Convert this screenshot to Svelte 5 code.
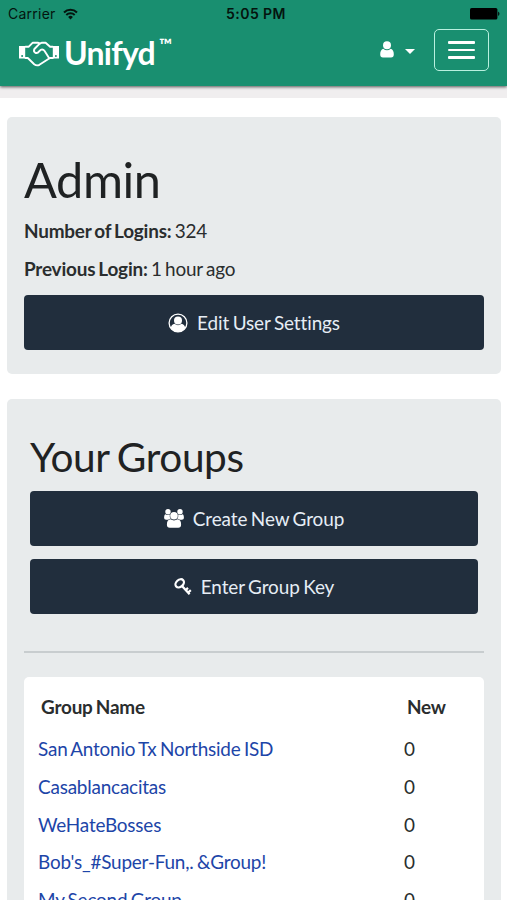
<script lang="ts">
  interface Group {
    id: number;
    name: string;
    unread: number;
  }

  const userName: string = "Admin";
  const logins: number = 324;
  const previousLogin: string = "1 hour ago";

  let groups: Group[] = [
    { id: 1, name: "San Antonio Tx Northside ISD", unread: 0 },
    { id: 2, name: "Casablancacitas", unread: 0 },
    { id: 3, name: "WeHateBosses", unread: 0 },
    { id: 4, name: "Bob's_#Super-Fun,. &Group!", unread: 0 },
    { id: 5, name: "My Second Group", unread: 0 },
  ];
</script>

<div class="screen">
  <header class="navbar">
    <div class="status-bar">
      <div class="carrier">
        <span>Carrier</span>
        <svg width="15" height="12" viewBox="0 0 15 12" fill="none" stroke="#04140e">
          <path d="M1 4.4a9.4 9.4 0 0 1 13 0" stroke-width="2.1" />
          <path d="M3.3 7a6.1 6.1 0 0 1 8.4 0" stroke-width="2" />
          <path d="M7.5 11.5 5.1 9a3.4 3.4 0 0 1 4.8 0z" fill="#04140e" stroke="none" />
        </svg>
      </div>
      <span class="clock">5:05 PM</span>
      <div class="battery">
        <svg width="30" height="12" viewBox="0 0 30 12" fill="#000">
          <rect x="0" y="0" width="27.4" height="11.6" rx="1.6" />
          <path d="M28.2 3.6a2.6 2.6 0 0 1 0 4.4z" />
        </svg>
      </div>
    </div>

    <div class="nav-row">
      <div class="brand">
        <svg class="handshake" width="40" height="27" viewBox="0 0 40 27">
          <g fill="none" stroke="#fff" stroke-width="1.9" stroke-linejoin="round" stroke-linecap="round">
            <path d="M6.500 5.700h3.300l4-4h5l1.900.9 2.300-.9h3.600l4.500 4h2.600" />
            <path d="M6.500 17h2.300l6.400 6.200q2.500 2 5.200.6l8.200-5.300 2.300-1.500h2.900" />
            <path d="M20.700 2.600 15.400 8q-1.200 2.500.9 3.800 2.400.8 3.700-1.300l1.700-1.700q2.500-.8 3.900 1.200l4.600 7.200" />
          </g>
          <path d="M0 5h6.200v12.500H0z" fill="#fff" />
          <path d="M33.800 5H40v12.500h-6.200z" fill="#fff" />
          <circle cx="3.100" cy="15" r="1" fill="#198f70" />
          <circle cx="36.900" cy="15" r="1" fill="#198f70" />
        </svg>
        <span class="brand-name">Unifyd</span>
        <span class="tm">™</span>
      </div>

      <div class="nav-actions">
        <svg width="14" height="17" viewBox="0 0 14 17" fill="#fff">
          <circle cx="7" cy="4.200" r="4" />
          <path d="M3.200 7.700Q5 9.300 7 9.300t3.800-1.600Q13.800 8.700 13.800 13.300 13.800 16.600 11 16.600H3Q.2 16.600.2 13.300.2 8.700 3.200 7.700z" />
        </svg>
        <span class="caret"></span>
        <button class="toggle" aria-label="Menu">
          <span></span>
          <span></span>
          <span></span>
        </button>
      </div>
    </div>
  </header>

  <main>
    <section class="well">
      <h1>{userName}</h1>
      <p><b>Number of Logins:</b> {logins}</p>
      <p><b>Previous Login:</b> {previousLogin}</p>
      <button class="btn">
        <svg width="20" height="20" viewBox="0 0 20 20">
          <circle cx="10" cy="10" r="8.900" fill="none" stroke="#fff" stroke-width="1.300" />
          <circle cx="10" cy="7.500" r="4" fill="#fff" />
          <path d="M2.700 15Q3.600 11 6.500 10.700q3.500 2.900 7 0 2.900.3 3.800 4.300a8.700 8.700 0 0 1-14.600 0z" fill="#fff" />
        </svg>
        <span>Edit User Settings</span>
      </button>
    </section>

    <section class="well">
      <div class="group-actions">
        <h2>Your Groups</h2>
        <button class="btn">
          <svg width="20" height="19" viewBox="0 0 20 19" fill="#fff">
            <circle cx="4" cy="2.800" r="2.700" />
            <circle cx="16" cy="2.800" r="2.700" />
            <path d="M1.600 5.200q2.400 1.500 4.200.4-.5 2.800.9 4.100-1.500 0-2.500 1H2.100Q.1 10.700.1 9q0-3.600 1.500-3.800z" />
            <path d="M18.400 5.200q-2.400 1.500-4.200.4.500 2.800-.9 4.100 1.500 0 2.500 1h2.100q2 0 2-1.700 0-3.600-1.500-3.800z" />
            <circle cx="10" cy="6.700" r="3.800" />
            <path d="M6.400 10.300q3.600 2.300 7.200 0 3.500.2 3.500 5.400 0 3-2.900 3H5.800q-2.900 0-2.900-3 0-5.200 3.500-5.400z" />
          </svg>
          <span>Create New Group</span>
        </button>
        <button class="btn">
          <svg width="18" height="18" viewBox="0 0 18 18" fill="none" stroke="#fff">
            <ellipse cx="5.700" cy="5.300" rx="4.700" ry="3.500" transform="rotate(-42 5.700 5.300)" stroke-width="2.200" />
            <path d="M8 8 15.600 16.300M11.800 12 14 9.900M14.200 14.500 16.800 12.200" stroke-width="2.300" />
          </svg>
          <span>Enter Group Key</span>
        </button>
      </div>

      <hr />

      <!-- group list -->
      <div class="panel">
        <div class="row head">
          <span class="name">Group Name</span>
          <span class="count">New</span>
        </div>
        {#each groups as group (group.id)}
          <div class="row">
            <a class="name" href="#group-{group.id}">{group.name}</a>
            <span class="count">{group.unread}</span>
          </div>
        {/each}
      </div>
    </section>
  </main>
</div>

<style>
  :global(body) {
    background: #fff;
    overflow: hidden;
  }

  .screen {
    height: 900px;
    overflow: hidden;
    font-family: Lato, sans-serif;
    font-size: 18.93px;
    line-height: 27px;
    letter-spacing: -0.2px;
    word-spacing: -1.3px;
    color: #2a2d2e;
  }

  .navbar {
    height: 86px;
    background: #198f70;
    box-shadow: 0 1px 3px rgba(0, 0, 0, 0.65);
    position: relative;
  }

  .status-bar {
    display: grid;
    grid-template-columns: 1fr auto 1fr;
    align-items: center;
    height: 27px;
    padding: 0 7px 0 8px;
    font-family: Inter, sans-serif;
    font-size: 14px;
    letter-spacing: 0.25px;
    word-spacing: 0;
    color: #04140e;
  }

  .carrier {
    display: flex;
    align-items: center;
    gap: 7px;
  }

  .clock {
    margin-left: 4px;
    font-weight: 600;
    letter-spacing: 0.45px;
  }

  .battery {
    display: flex;
    justify-content: flex-end;
  }

  .nav-row {
    display: flex;
    justify-content: space-between;
    padding: 2px 18px 0 19px;
  }

  .brand {
    display: flex;
    color: #fff;
  }

  .handshake {
    margin-top: 12px;
  }

  .brand-name {
    margin: 5px 0 0 5px;
    font-size: 32px;
    font-weight: 700;
    line-height: 38px;
    letter-spacing: -0.75px;
  }

  .tm {
    margin: 6px 0 0 4px;
    font-size: 17px;
    font-weight: 700;
    line-height: 20px;
  }

  .nav-actions {
    display: flex;
    align-items: center;
    height: 42px;
  }

  .nav-actions svg {
    margin-bottom: 1px;
  }

  .caret {
    margin: 2px 19px 0 11px;
    border: 5px solid transparent;
    border-top-color: #fff;
    border-bottom: 0;
  }

  .toggle {
    display: flex;
    flex-direction: column;
    align-items: center;
    justify-content: center;
    gap: 5px;
    width: 55px;
    height: 42px;
    padding: 0;
    background: none;
    border: 1.4px solid #b9f0df;
    border-radius: 5px;
  }

  .toggle span {
    width: 27px;
    height: 2.6px;
    background: #fff;
    border-radius: 1px;
  }

  main {
    padding: 19px 6px 0 7px;
    border-top: 12px solid #f0eeef;
  }

  .well {
    padding: 17px 17px 24px;
    margin-bottom: 25px;
    background: #e8ebec;
    border-radius: 5px;
  }

  h1,
  h2 {
    font-weight: 400;
    letter-spacing: -0.4px;
    word-spacing: -2px;
    color: #1f2223;
  }

  h1 {
    margin: 19px 0 11px;
    font-size: 48.7px;
    line-height: 53px;
  }

  h2 {
    margin: 19px 0 12px;
    font-size: 40.6px;
    line-height: 44px;
  }

  p {
    margin: 0 0 11px;
  }

  p + p {
    margin-bottom: 13px;
  }

  .btn {
    display: flex;
    align-items: center;
    justify-content: center;
    gap: 9px;
    width: 100%;
    height: 55px;
    padding: 0;
    font: inherit;
    letter-spacing: -0.1px;
    word-spacing: -1.2px;
    color: #e6edf5;
    background: #212e3d;
    border: 0;
    border-radius: 4px;
  }

  .group-actions {
    padding: 0 6px;
  }

  .group-actions .btn {
    margin-bottom: 13px;
  }

  hr {
    height: 2px;
    margin: 37px 0 24px;
    background: #c8cdcf;
    border: 0;
  }

  .panel {
    padding: 13px 14px;
    background: #fff;
    border-radius: 5px;
  }

  .row {
    display: flex;
    height: 37.8px;
    line-height: 37.8px;
  }

  .head {
    height: 40px;
    line-height: 34px;
    font-weight: 700;
    padding-left: 3px;
  }

  .name {
    width: 366px;
  }

  a {
    color: #1d45a8;
    text-decoration: none;
  }
</style>
